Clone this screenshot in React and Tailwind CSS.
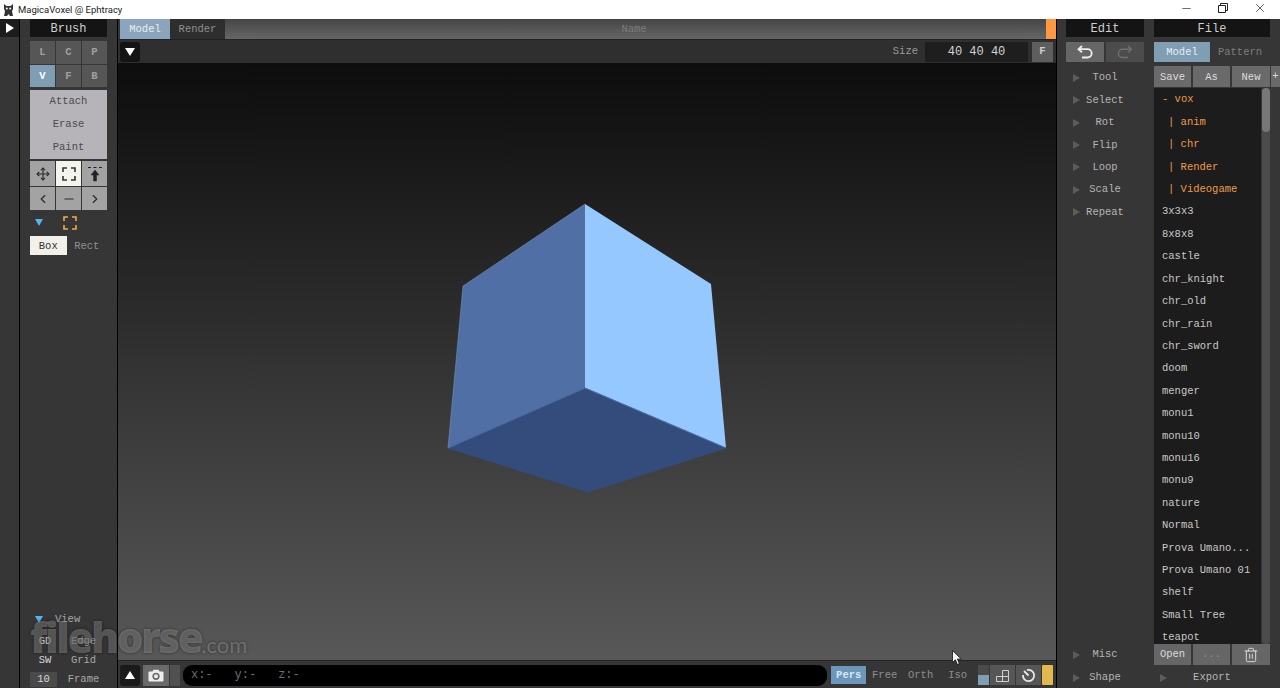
import { Move, ChevronLeft, ChevronRight, Minus, Trash2, X } from "lucide-react";

const mono = "font-['Liberation_Mono',monospace] text-[10.5px] leading-none";

const files = [
    ["- vox", "o", 0], ["| anim", "o", 1], ["| chr", "o", 1], ["| Render", "o", 1], ["| Videogame", "o", 1],
    ["3x3x3"], ["8x8x8"], ["castle"], ["chr_knight"], ["chr_old"], ["chr_rain"], ["chr_sword"], ["doom"],
    ["menger"], ["monu1"], ["monu10"], ["monu16"], ["monu9"], ["nature"], ["Normal"], ["Prova Umano..."],
    ["Prova Umano 01"], ["shelf"], ["Small Tree"], ["teapot"],
];

function Tri({ className = "" }) {
    return <span className={`w-0 h-0 border-y-[4px] border-y-transparent border-l-[7px] border-l-[#5c5c5c] ${className}`} />;
}

function Corners({ color = "#222", size = 16 }) {
    return (
        <svg width={size} height={size} viewBox="0 0 16 16" fill="none" stroke={color} strokeWidth="1.6">
            <path d="M6 2H2V6M10 2H14V6M2 10V14H6M14 10V14H10" />
        </svg>
    );
}

function Cell({ children, active, className = "" }) {
    return (
        <div className={`flex items-center justify-center font-bold ${active ? "bg-[#7f9db3] text-white" : "bg-[#565656] text-[#a0a0a0]"} ${className}`}>
            {children}
        </div>
    );
}

function ToolRow({ label, tall }) {
    return (
        <div className={`${tall ? "h-[23px] pt-[2px]" : "h-[22.42px] pt-px"} flex items-center relative justify-center text-[#b5b5b5]`}>
            <Tri className="absolute left-[7px]" />
            {label}
        </div>
    );
}

function LeftPanel() {
    return (
        <aside className="w-[98px] bg-[#363636] border-r border-black px-[10px] flex flex-col justify-between shrink-0">
            <div className="flex flex-col">
                <div className="h-[18px] pt-px bg-[#141414] text-[#d0d0d0] text-[12px] flex items-center justify-center">Brush</div>
                <div className="grid grid-cols-3 gap-px mt-[4px] h-[46px]">
                    {["L", "C", "P"].map((t) => <Cell key={t}>{t}</Cell>)}
                    <Cell active>V</Cell>
                    <Cell>F</Cell>
                    <Cell>B</Cell>
                </div>
                <div className="mt-[3px] h-[69px] bg-[#b6b4b9] text-[#4a4a4a] flex flex-col justify-around items-center">
                    <span>Attach</span><span>Erase</span><span>Paint</span>
                </div>
                <div className="grid grid-cols-3 gap-px mt-[2px] h-[49px] text-[#2a2a2a]">
                    <div className="bg-[#a3a3a3] flex items-center justify-center"><Move size={14} strokeWidth={2} /></div>
                    <div className="bg-[#f4f4ee] flex items-center justify-center"><Corners color="#333" /></div>
                    <div className="bg-[#a3a3a3] flex items-center justify-center">
                        <svg width="16" height="16" viewBox="0 0 16 16" fill="#222" stroke="#222">
                            <path d="M1 1.5H4M6.5 1.5H9.5M12 1.5H15" strokeWidth="1" fill="none" />
                            <path d="M8 4L12 9H9.5V15H6.5V9H4Z" strokeWidth="0.5" />
                        </svg>
                    </div>
                    <div className="bg-[#a3a3a3] flex items-center justify-center"><ChevronLeft size={14} strokeWidth={2} /></div>
                    <div className="bg-[#a3a3a3] flex items-center justify-center"><Minus size={14} strokeWidth={2} /></div>
                    <div className="bg-[#a3a3a3] flex items-center justify-center"><ChevronRight size={14} strokeWidth={2} /></div>
                </div>
                <div className="h-[25px] flex items-center pl-[5px] gap-[19px]">
                    <span className="w-0 h-0 border-x-[4px] border-x-transparent border-t-[7px] border-t-[#53b5f2]" />
                    <Corners color="#f2ab4c" />
                </div>
                <div className="flex items-center mt-[1px]">
                    <div className="w-[37px] h-[19px] pt-px bg-[#f1f1e9] text-[#333] flex items-center justify-center">Box</div>
                    <div className="w-[41px] pt-px text-center text-[#8f8f8f]">Rect</div>
                </div>
            </div>
            <div className="flex flex-col text-[#a8a8a8]">
                <div className="flex items-center h-[24px] pl-[5px] relative">
                    <span className="w-0 h-0 border-x-[4px] border-x-transparent border-t-[7px] border-t-[#53b5f2]" />
                    <span className="ml-[12px]">View</span>
                </div>
                <div className="flex items-center h-[20px]">
                    <span className="w-[30px] text-center text-[#d8d8d8]">GD</span>
                    <span className="flex-1 text-center">Edge</span>
                </div>
                <div className="flex items-center h-[19px]">
                    <span className="w-[30px] text-center text-[#d8d8d8]">SW</span>
                    <span className="flex-1 text-center">Grid</span>
                </div>
                <div className="flex items-center h-[18px]">
                    <span className="w-[27px] h-[15px] bg-[#4a4a4a] text-[#d8d8d8] flex items-center justify-center">10</span>
                    <span className="flex-1 text-center pl-[3px]">Frame</span>
                </div>
            </div>
        </aside>
    );
}

function Cube() {
    return (
        <svg width="282" height="292" viewBox="446 202 282 292" strokeLinejoin="round">
            <polygon points="585,204 463,286 448,448 585,388" fill="#4f6fa5" />
            <polygon points="585,204 711,284 726,448 585,388" fill="#94c8ff" />
            <polygon points="585,388 726,448 588,492 448,448" fill="#344c7c" stroke="#344c7c" strokeWidth="1" />
            {/* lighter rim where the faces meet */}
            <path d="M585,204L463,286L448,448" fill="none" stroke="#7d9cd0" strokeWidth="1" opacity="0.5" />
            <path d="M448,448L585,388L726,448" fill="none" stroke="#6f9ad8" strokeWidth="1" opacity="0.5" />
        </svg>
    );
}

function Center() {
    return (
        <main className="flex-1 flex flex-col min-w-0">
            <div className="h-[21px] bg-[#363636] flex items-stretch pl-[2px] shrink-0 border-b border-[#222]">
                <div className="w-[50px] bg-[#8aa5bc] text-[#e8eef3] flex items-center justify-center">Model</div>
                <div className="w-[55px] bg-[#2e2e2e] text-[#8f8f8f] flex items-center justify-center">Render</div>
                <div className="flex-1 bg-[linear-gradient(#454545,#666666)] text-[#7c7c7c] flex items-center justify-center pr-[3px]">Name</div>
                <div className="w-[10px] bg-[#fd9a3f]" />
            </div>
            <div className="h-[23px] bg-[#2f2f2f] flex items-center pl-[2px] pr-[3px] shrink-0">
                <div className="w-[20px] h-[20px] bg-[#141414] rounded-[3px] flex items-center justify-center">
                    <span className="w-0 h-0 border-x-[5px] border-x-transparent border-t-[8px] border-t-white" />
                </div>
                <span className="ml-auto text-[#9a9a9a]">Size</span>
                <div className="ml-[7px] w-[103px] h-[20px] bg-[#1e1e1e] text-[#d4d4d4] text-[12px] flex items-center justify-center">40 40 40</div>
                <div className="ml-[4px] w-[21px] h-[20px] bg-[#5e5e5e] text-[#d0d0d0] flex items-center justify-center font-bold">F</div>
            </div>
            <div className="flex-1 bg-[linear-gradient(#0d0d0d,#1f1f1f_25%,#3a3a3a_60%,#585858)] flex items-center justify-center pb-[28px] border-b border-[#222]">
                <Cube />
            </div>
            <div className="h-[27px] pt-px bg-[#363636] flex items-center pl-[2px] pr-[3px] shrink-0">
                <div className="w-[20px] h-[21px] bg-[#1a1a1a] rounded-[3px] flex items-center justify-center">
                    <span className="w-0 h-0 border-x-[5px] border-x-transparent border-b-[8px] border-b-white" />
                </div>
                <div className="ml-[3px] w-[26px] h-[21px] bg-[#6a6a6a] flex items-center justify-center">
                    <svg width="16" height="13" viewBox="0 0 16 13">
                        <path d="M1.5 2.5H4.5L5.5 .8H10.5L11.5 2.5H14.5A1 1 0 0 1 15.5 3.5V11.5A1 1 0 0 1 14.5 12.5H1.5A1 1 0 0 1 .5 11.5V3.5A1 1 0 0 1 1.5 2.5Z" fill="#eee" />
                        <circle cx="8" cy="7.3" r="3.6" fill="#6a6a6a" />
                        <circle cx="8" cy="7.3" r="2" fill="#eee" />
                    </svg>
                </div>
                <div className="ml-[1px] w-[10px] h-[21px] bg-[#505050]" />
                <div className="ml-[3px] w-[645px] h-[21px] bg-black rounded-[9px] text-[#6f6f6f] text-[12px] flex items-center pl-[8px] gap-[22px]">
                    <span>x:-</span><span>y:-</span><span>z:-</span>
                </div>
                <div className="ml-[4px] w-[35px] h-[18px] bg-[#6b97bd] text-[#dbe6ef] flex items-center justify-center font-bold">Pers</div>
                <span className="ml-[3px] w-[31px] text-center text-[#8e8e8e]">Free</span>
                <span className="ml-[5px] w-[31px] text-center text-[#8e8e8e]">Orth</span>
                <span className="ml-[6px] w-[31px] text-center text-[#8e8e8e]">Iso</span>
                <div className="ml-[5px] w-[11px] h-[20px] flex flex-col">
                    <div className="flex-1 bg-[#4b4b4b]" />
                    <div className="flex-1 bg-[#7f9db3]" />
                </div>
                <div className="ml-[1px] w-[25px] h-[20px] bg-[#565656] flex items-center justify-center">
                    <svg width="15" height="15" viewBox="0 0 15 15" fill="none" stroke="#d0d0d0" strokeWidth="1">
                        <path d="M1.5 8.5H13.5V13.5H1.5ZM7.5 8.5V13.5M7.5 8.5V2.5H13.5V8.5" />
                    </svg>
                </div>
                <div className="ml-px w-[25px] h-[20px] bg-[#565656] flex items-center justify-center">
                    <svg width="15" height="15" viewBox="0 0 15 15" fill="none" stroke="#e8e8e8" strokeWidth="1.8">
                        <path d="M6 2.2A5.6 5.6 0 1 1 2 7" />
                        <path d="M3 3L7.5 7.5" />
                    </svg>
                </div>
                <div className="ml-px w-[11px] h-[20px] bg-[#e1b94f] rounded-[1px]" />
            </div>
        </main>
    );
}

function RightPanel() {
    return (
        <aside className="w-[224px] bg-[#363636] border-l border-black shrink-0 flex pl-[9px]">
            <div className="w-[78px] flex flex-col">
                <div className="h-[18px] pt-px bg-[#141414] text-[#d0d0d0] text-[12px] flex items-center justify-center">Edit</div>
                <div className="flex gap-[2px] mt-[5px] h-[20px]">
                    <div className="w-[38px] bg-[#666] flex items-center justify-center">
                        <svg width="16" height="14" viewBox="0 0 16 14" fill="none" stroke="#eee" strokeWidth="1.8">
                            <path d="M5 1L1.5 4.2L5 7.2M2 4.2H10.5A4 4 0 0 1 10.5 12.5H5" />
                        </svg>
                    </div>
                    <div className="w-[38px] bg-[#4c4c4c] flex items-center justify-center">
                        <svg width="16" height="14" viewBox="0 0 16 14" fill="none" stroke="#707070" strokeWidth="1.4">
                            <path d="M11 1L14.5 4.2L11 7.2M14 4.2H5.5A4 4 0 0 0 5.5 12.5H11" />
                        </svg>
                    </div>
                </div>
                <div className="mt-[4px]">
                    {["Tool", "Select", "Rot", "Flip", "Loop", "Scale", "Repeat"].map((t) => <ToolRow key={t} label={t} />)}
                </div>
                <div className="mt-auto">
                    <ToolRow label="Misc" tall />
                    <ToolRow label="Shape" tall />
                </div>
            </div>
            <div className="ml-[10px] w-[126px] flex flex-col">
                <div className="w-[116px] h-[18px] pt-px bg-[#141414] text-[#d0d0d0] text-[12px] flex items-center justify-center">File</div>
                <div className="flex h-[20px] mt-[5px]">
                    <div className="w-[56px] bg-[#7f9db3] text-[#e8eef3] flex items-center justify-center">Model</div>
                    <div className="w-[60px] text-[#7d7d7d] flex items-center justify-center">Pattern</div>
                </div>
                <div className="flex gap-[2px] h-[21px] pt-0 mt-[4px] text-[#dcdcdc]">
                    <div className="w-[37px] pt-px bg-[#6a6a6a] flex items-center justify-center">Save</div>
                    <div className="w-[37px] pt-px bg-[#6a6a6a] flex items-center justify-center">As</div>
                    <div className="w-[38px] pt-px bg-[#6a6a6a] flex items-center justify-center">New</div>
                    <div className="w-[9px] -ml-px bg-[#6a6a6a] flex items-center justify-center">+</div>
                </div>
                <div className="flex h-[556px] mt-px">
                    <div className="w-[107px] bg-[#1c1c1c] overflow-hidden pl-[8px]">
                        {files.map(([name, tone, indent]) => (
                            <div key={name} className={`h-[22.42px] pt-px flex items-center whitespace-pre ${tone ? "text-[#ee9a49]" : "text-[#c8c8c8]"} ${indent ? "pl-[6px]" : ""}`}>
                                {name}
                            </div>
                        ))}
                    </div>
                    <div className="ml-px w-[8px] bg-[#4b4b4b] rounded-[4px]">
                        <div className="h-[44px] bg-[#777] rounded-[4px]" />
                    </div>
                </div>
                <div className="flex gap-[2px] h-[21px] text-[#dcdcdc]">
                    <div className="w-[37px] bg-[#666] flex items-center justify-center">Open</div>
                    <div className="w-[37px] bg-[#666] text-[#8f8f8f] flex items-center justify-center">...</div>
                    <div className="w-[38px] bg-[#666] flex items-center justify-center"><Trash2 size={16} strokeWidth={1.3} color="#e8e8e8" /></div>
                </div>
                <div className="h-[23px] pt-[2px] flex items-center relative w-[116px] justify-center text-[#b5b5b5]">
                    <Tri className="absolute left-[6px]" />
                    Export
                </div>
            </div>
        </aside>
    );
}

export default function App() {
    return (
        <div className={`w-[1280px] h-[688px] flex flex-col overflow-hidden relative bg-[#363636] ${mono}`}>
            <header className="h-[19px] bg-white flex items-center shrink-0 font-['Roboto',sans-serif] text-[9.5px] text-[#222]">
                <svg className="ml-[3px]" width="11" height="14" viewBox="0 0 11 14">
                    <path d="M1 1L3.5 3H7.5L10 1V6L9 8L10 13H7L5.5 11L4 13H1L2 8L1 6Z" fill="#333" />
                    <circle cx="3.8" cy="5.5" r="1" fill="#fff" />
                    <circle cx="7.2" cy="5.5" r="1" fill="#fff" />
                </svg>
                <span className="ml-[4px]">MagicaVoxel @ Ephtracy</span>
                <div className="ml-auto flex items-center pb-[3px]">
                    <Minus size={13} strokeWidth={1.2} color="#222" className="mr-[25px]" />
                    <svg className="mr-[25px]" width="10" height="10" viewBox="0 0 10 10" fill="none" stroke="#222">
                        <path d="M.5 2.5H7.5V9.5H.5ZM2.5 2.5V.5H9.5V7.5H7.5" />
                    </svg>
                    <X size={14} strokeWidth={1.2} color="#222" className="mr-[13px]" />
                </div>
            </header>
            <div className="flex-1 flex min-h-0">
                <div className="w-[20px] bg-[#363636] border-r border-black shrink-0">
                    <div className="h-[18px] bg-[#1c1c1c] flex items-center pl-[6px]">
                        <span className="w-0 h-0 border-y-[5px] border-y-transparent border-l-[8px] border-l-white" />
                    </div>
                </div>
                <LeftPanel />
                <Center />
                <RightPanel />
            </div>
            {/* site watermark */}
            <div className="absolute left-[30px] top-[616px] flex items-baseline text-white/25 font-['Open_Sans',sans-serif] pointer-events-none [text-shadow:0_0_3px_rgba(0,0,0,0.5)]">
                <span className="text-[42px] leading-none font-extrabold tracking-[-2.4px]">filehorse</span>
                <span className="text-[22px] leading-none font-['Lato',sans-serif]">.com</span>
            </div>
            {/* mouse pointer */}
            <svg className="absolute left-[952px] top-[650px]" width="10" height="16" viewBox="0 0 10 16">
                <path d="M.5 .5V12.5L3.4 9.8L5.4 14.5L7.4 13.6L5.4 9H9.2Z" fill="#f4f4f4" stroke="#111" strokeWidth="0.8" />
            </svg>
        </div>
    );
}
